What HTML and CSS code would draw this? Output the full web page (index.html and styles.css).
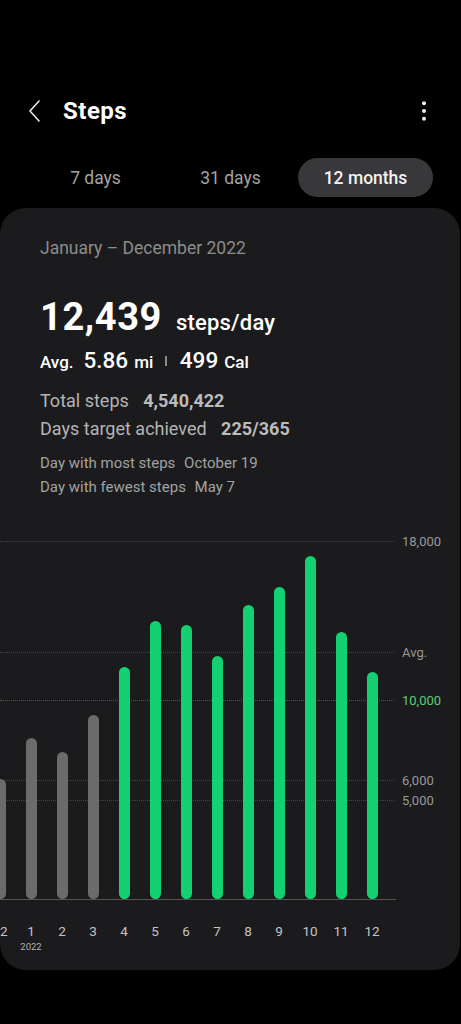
FILE: index.html
```html
<!DOCTYPE html>
<html lang="en">
<head>
    <meta charset="UTF-8">
    <meta name="viewport" content="width=device-width, initial-scale=1.0">
    <title>Steps</title>
    <link rel="stylesheet" href="styles.css">
</head>
<body>

    <header class="app-bar">
        <button class="back" aria-label="Back">
            <svg width="14" height="22" viewBox="0 0 14 22"><path d="M11 1 L2 11 L11 21" fill="none" stroke="#e8e8e8" stroke-width="1.6" stroke-linecap="round" stroke-linejoin="round"/></svg>
        </button>
        <h1 class="title">Steps</h1>
        <button class="more" aria-label="More options">
            <svg width="6" height="22" viewBox="0 0 6 22"><circle cx="3" cy="3.3" r="2"/><circle cx="3" cy="11" r="2"/><circle cx="3" cy="18.7" r="2"/></svg>
        </button>
    </header>

    <nav class="tabs">
        <span class="tab">7 days</span>
        <span class="tab">31 days</span>
        <span class="tab active">12 months</span>
    </nav>

    <section class="card">
        <div class="range">January – December 2022</div>

        <div class="daily">
            <span class="big">12,439</span>
            <span class="unit">steps/day</span>
        </div>

        <div class="avg">
            <span class="small">Avg.</span>
            <span class="num">5.86</span>
            <span class="small">mi</span>
            <span class="sep"></span>
            <span class="num">499</span>
            <span class="small">Cal</span>
        </div>

        <div class="stat">Total steps <b>4,540,422</b></div>
        <div class="stat">Days target achieved <b>225/365</b></div>

        <div class="note">Day with most steps <span>October 19</span></div>
        <div class="note">Day with fewest steps <span>May 7</span></div>

        <div class="chart">
            <div class="grid" style="bottom: 358px;"><i></i><span>18,000</span></div>
            <div class="grid" style="bottom: 247px;"><i></i><span>Avg.</span></div>
            <div class="grid goal" style="bottom: 199px;"><i></i><span>10,000</span></div>
            <div class="grid" style="bottom: 119px;"><i></i><span>6,000</span></div>
            <div class="grid" style="bottom: 99px;"><i></i><span>5,000</span></div>

            <div class="bars">
                <div class="col"><div class="bar" style="height: 120px;"></div></div>
                <div class="col"><div class="bar" style="height: 161px;"></div></div>
                <div class="col"><div class="bar" style="height: 147px;"></div></div>
                <div class="col"><div class="bar" style="height: 184px;"></div></div>
                <div class="col"><div class="bar hit" style="height: 232px;"></div></div>
                <div class="col"><div class="bar hit" style="height: 278px;"></div></div>
                <div class="col"><div class="bar hit" style="height: 274px;"></div></div>
                <div class="col"><div class="bar hit" style="height: 243px;"></div></div>
                <div class="col"><div class="bar hit" style="height: 294px;"></div></div>
                <div class="col"><div class="bar hit" style="height: 312px;"></div></div>
                <div class="col"><div class="bar hit" style="height: 343px;"></div></div>
                <div class="col"><div class="bar hit" style="height: 267px;"></div></div>
                <div class="col"><div class="bar hit" style="height: 227px;"></div></div>
            </div>
        </div>

        <div class="months">
            <div class="col">12</div>
            <div class="col">1<small>2022</small></div>
            <div class="col">2</div>
            <div class="col">3</div>
            <div class="col">4</div>
            <div class="col">5</div>
            <div class="col">6</div>
            <div class="col">7</div>
            <div class="col">8</div>
            <div class="col">9</div>
            <div class="col">10</div>
            <div class="col">11</div>
            <div class="col">12</div>
        </div>
    </section>

</body>
</html>
```

FILE: styles.css
```css
body {
    margin: 0;
    background-color: #000;
    color: #fff;
    font-family: Roboto, "Noto Sans", sans-serif;
    width: 461px;
    height: 1024px;
    overflow: hidden;
}

/* barre du haut */
.app-bar {
    display: flex;
    align-items: center;
    height: 56px;
    margin-top: 83px;
}
.back, .more {
    background: none;
    border: none;
    padding: 0;
    display: flex;
    cursor: pointer;
}
.back {
    margin-left: 28px;
}
.more {
    margin-left: auto;
    margin-right: 34px;
    fill: #eee;
}
.title {
    margin: 0 0 0 21px;
    font-size: 24px;
    font-weight: 700;
    letter-spacing: 0.5px;
}

/* onglets */
.tabs {
    display: grid;
    grid-template-columns: repeat(3, 1fr);
    margin: 19px 28px 0;
    height: 39px;
}
.tab {
    display: flex;
    align-items: center;
    justify-content: center;
    font-size: 17.5px;
    color: #a4a4a4;
    border-radius: 20px;
}
.tab.active {
    background-color: #38383a;
    color: #f2f2f2;
    font-weight: 500;
}

/* carte principale */
.card {
    margin: 11px 1px 0 0;
    height: 762px;
    box-sizing: border-box;
    background-color: #1b1b1d;
    border-radius: 26px;
    padding-top: 28px;
    overflow: hidden;
}
.range {
    padding-left: 40px;
    font-size: 17.5px;
    line-height: 24px;
    color: #8c8c8c;
}
.daily {
    margin-top: 35px;
    padding-left: 40px;
    line-height: 44px;
}
.big {
    font-size: 38px;
    font-weight: 700;
    letter-spacing: 0.6px;
}
.unit {
    margin-left: 10px;
    font-size: 22px;
    font-weight: 500;
    letter-spacing: 0.2px;
}
.avg {
    display: flex;
    align-items: baseline;
    padding-left: 40px;
    font-size: 20px;
    line-height: 26px;
}
.avg .small {
    font-size: 17px;
    font-weight: 500;
}
.avg .num {
    font-size: 22.5px;
    font-weight: 500;
    margin: 0 6px 0 10px;
}
.avg .sep {
    width: 1.5px;
    height: 10px;
    background-color: #8a8a8a;
    margin: 0 3px 0 12px;
    align-self: center;
}
.stat {
    padding-left: 40px;
    font-size: 18px;
    line-height: 28px;
    color: #b4b4b4;
}
.avg + .stat {
    margin-top: 12px;
}
.stat b {
    margin-left: 10px;
    font-weight: 700;
    color: #bcbcbc;
}
.note {
    padding-left: 40px;
    font-size: 15px;
    line-height: 24px;
    color: #a2a2a2;
}
.stat + .note {
    margin-top: 8px;
}
.note span {
    margin-left: 5px;
}

/* graphique */
.chart {
    position: relative;
    height: 358px;
    width: 396px;
    margin-top: 42px;
    border-bottom: 1px solid #555;
}
.grid {
    position: absolute;
    left: 0;
    width: 461px;
    height: 0;
    display: flex;
    align-items: center;
}
.grid i {
    width: 394px;
    border-top: 1px dotted #444;
}
.grid span {
    margin-left: 8px;
    font-size: 13px;
    color: #999;
}
.grid.goal i {
    border-top-color: #2f6d45;
}
.grid.goal span {
    color: #5ccd76;
}
.bars {
    position: relative;
    display: flex;
    align-items: flex-end;
    height: 100%;
    margin-left: -15.5px;
}
.col {
    width: 31px;
    flex: none;
    display: flex;
    flex-direction: column;
    align-items: center;
}
.bar {
    width: 11px;
    border-radius: 6px;
    background-color: #6b6b6b;
}
.bar.hit {
    background-color: #13d173;
}
.months {
    display: flex;
    margin: 23px 0 0 -15.5px;
    font-size: 13.5px;
    line-height: 16px;
    color: #c4c4c4;
}
.months small {
    margin-top: 2px;
    font-size: 9.5px;
    line-height: 12px;
    color: #b0b0b0;
}
```
